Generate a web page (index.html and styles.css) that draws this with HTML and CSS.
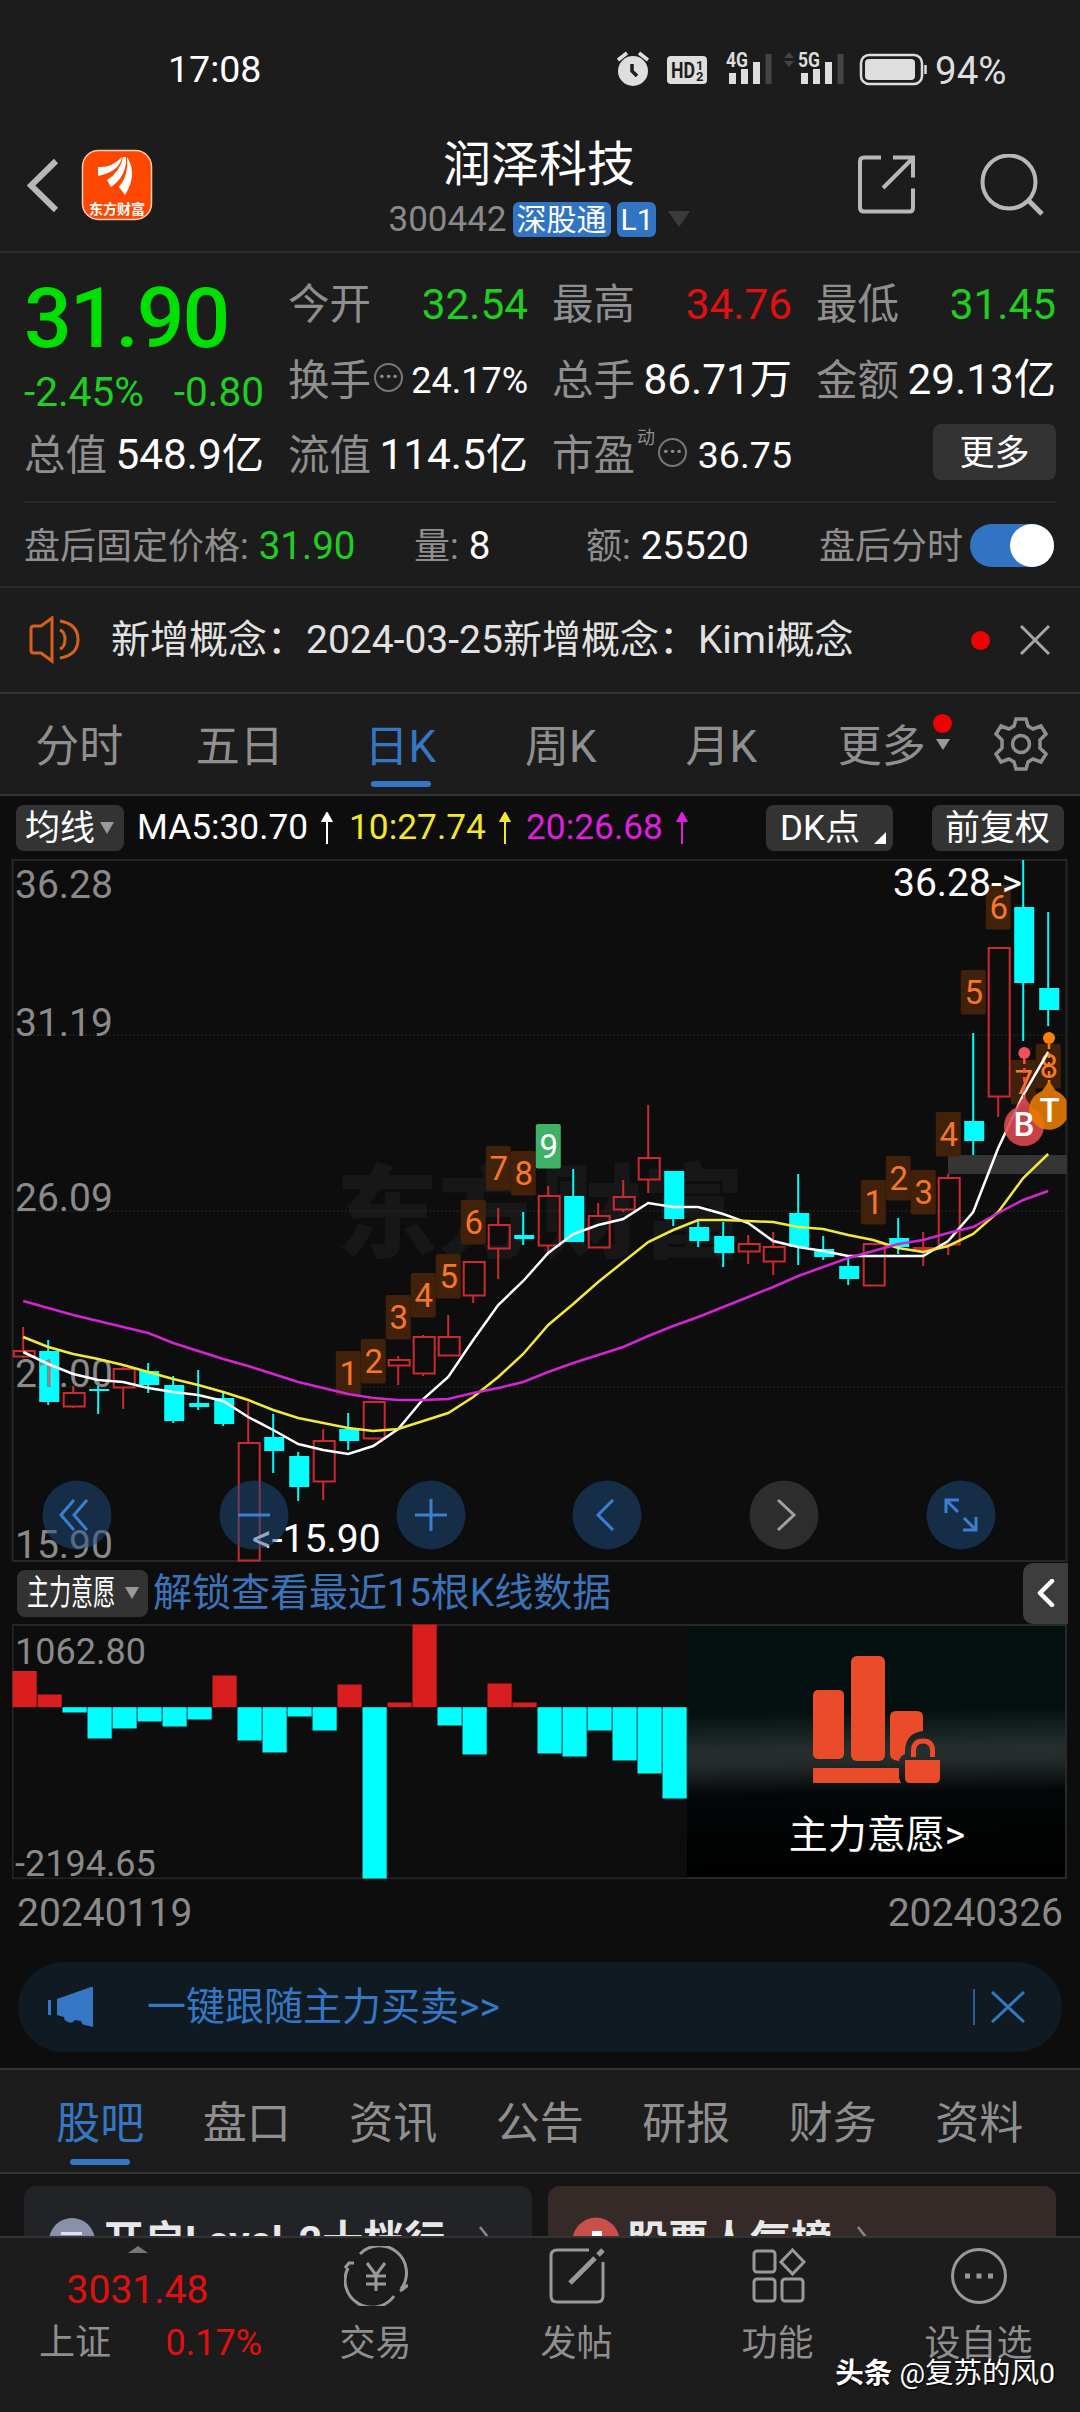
FILE: index.html
```html
<!DOCTYPE html>
<html lang="zh-CN">

<head>
    <meta charset="UTF-8">
    <meta name="viewport" content="width=device-width, initial-scale=1.0">
    <title>润泽科技 300442</title>
    <link rel="stylesheet" href="styles.css">
</head>

<body>
    <div class="status-bar">
        <span class="time">17:08</span>
        <svg class="status-icons" width="312" height="44" viewBox="616 48 312 44">
            <circle cx="633" cy="71" r="15" fill="#dedede" />
            <path d="M618 60l9-7M648 60l-9-7" stroke="#dedede" stroke-width="3.5" />
            <path d="M632 64v7l5 5" stroke="#1c1c1c" stroke-width="3.5" fill="none" />
            <rect x="667" y="56" width="40" height="28" rx="4" fill="#dedede" />
            <text x="671" y="78" class="hd" textLength="24" lengthAdjust="spacingAndGlyphs">HD</text>
            <text x="696" y="70" class="hd-s">1</text>
            <text x="696" y="81" class="hd-s">2</text>
            <text x="726" y="67" class="net" textLength="22" lengthAdjust="spacingAndGlyphs">4G</text>
            <path d="M732.500 73v11M744.500 69v15M756.500 62v22" stroke="#dedede" stroke-width="7" />
            <path d="M768.500 54v30" stroke="#444" stroke-width="6" />
            <path d="M784 58l5-6 5 6zM784 61l5 6 5-6z" fill="#444" />
            <text x="798" y="67" class="net" textLength="22" lengthAdjust="spacingAndGlyphs">5G</text>
            <path d="M804.500 73v11M816.500 69v15M828.500 62v22" stroke="#dedede" stroke-width="7" />
            <path d="M840.500 54v30" stroke="#444" stroke-width="6" />
            <rect x="861" y="55" width="61" height="29" rx="8" fill="none" stroke="#dedede" stroke-width="2.500" />
            <rect x="865" y="59" width="50" height="21" rx="4" fill="#dedede" />
            <path d="M925.500 65v9" stroke="#dedede" stroke-width="2.500" />
        </svg>
        <span class="battery">94%</span>
    </div>

    <header>
        <svg width="128" height="80" viewBox="26 145 128 80">
            <path d="M56 161L31 185.500L56 210" fill="none" stroke="#b8b8b8" stroke-width="6" />
            <rect x="82.500" y="150.500" width="69" height="69" rx="16" fill="#fe4800" stroke="#ffc9b0" stroke-width="1.500" />
            <path d="M98 167Q112 168 122 157Q119 172 98 176ZM123 157L126 157Q127 176 111 187L107 180Q120 172 123 157ZM127 157Q138 174 125 195L119 187Q129 175 127 157Z" fill="#fff" />
            <text x="89" y="214" class="logo-text">东方财富</text>
        </svg>
        <div class="title">
            <h1>润泽科技</h1>
            <div class="code">
                <span>300442</span><b>深股通</b><b class="l1">L1</b>
                <svg width="22" height="16"><path d="M0 0h22l-11 16z" fill="#3b3b3b" /></svg>
            </div>
        </div>
        <svg width="190" height="62" viewBox="856 155 190 62" fill="none" stroke="#b8b8b8" stroke-width="4">
            <path d="M881 158.500h-17q-4 0-4 4v46q0 4 4 4h46q3 0 3-4v-19M893 158.500h20v20M912 160l-29 29" />
            <circle cx="1009" cy="183" r="26.500" />
            <path d="M1028 201l14 14" stroke-width="5" />
        </svg>
    </header>

    <section class="quote">
        <div class="grid">
            <div class="price">31.90</div>
            <div class="cell"><label>今开</label><span class="green big">32.54</span></div>
            <div class="cell"><label>最高</label><span class="red big">34.76</span></div>
            <div class="cell"><label>最低</label><span class="green big">31.45</span></div>
            <div class="cell change green"><span>-2.45%</span><span>-0.80</span></div>
            <div class="cell"><label>换手<i class="dots">···</i></label><span class="mid">24.17%</span></div>
            <div class="cell"><label>总手</label><span>86.71万</span></div>
            <div class="cell"><label>金额</label><span>29.13亿</span></div>
            <div class="cell"><label>总值</label><span>548.9亿</span></div>
            <div class="cell"><label>流值</label><span>114.5亿</span></div>
            <div class="cell"><label>市盈<sup>动</sup><i class="dots">···</i></label><span class="mid pe">36.75</span></div>
            <div class="cell end"><button class="more">更多</button></div>
        </div>
        <div class="after">
            <div class="a1"><label>盘后固定价格:</label><span class="green">31.90</span></div>
            <div class="a2"><label>量:</label><span>8</span></div>
            <div class="a3"><label>额:</label><span>25520</span></div>
            <div class="a4"><label>盘后分时</label><div class="switch"></div></div>
        </div>
    </section>

    <section class="news">
        <svg width="54" height="48" viewBox="28 616 54 48" fill="none" stroke="#d8601c" stroke-width="3">
            <path d="M31 629q0-3 3-3h7l11-8v43l-11-8h-7q-3 0-3-3zM60 630q5 2 5 9.500t-5 9.500M60 621q18 3 18 18.500T60 658" />
        </svg>
        <p>新增概念：2024-03-25新增概念：Kimi概念</p>
        <div class="dot"></div>
        <svg width="30" height="30"><path d="M1 1l28 28M29 1L1 29" stroke="#a5a5a5" stroke-width="3" /></svg>
    </section>

    <nav class="periods">
        <a>分时</a>
        <a>五日</a>
        <a class="active">日K</a>
        <a>周K</a>
        <a>月K</a>
        <a>更多<i class="badge"></i><i class="arrow"></i></a>
        <svg width="58" height="58" viewBox="-29 -29 58 58" fill="none" stroke="#8f8f8f" stroke-width="3.500">
            <path d="M-5-25h10l2 7 5 3 8-3 5 8-6 6v8l6 6-5 8-8-3-5 3-2 7h-10l-2-7-5-3-8 3-5-8 6-6v-8l-6-6 5-8 8 3 5-3z" />
            <circle r="8.500" />
        </svg>
    </nav>

    <main>
        <div class="ma-row">
            <button class="ma-btn">均线<i class="down"></i></button>
            <span class="ma5">MA5:30.70<svg width="12" height="32"><path d="M6 32V6M1.500 9l4.500-8 4.500 8z" /></svg></span>
            <span class="ma10">10:27.74<svg width="12" height="32"><path d="M6 32V6M1.500 9l4.500-8 4.500 8z" /></svg></span>
            <span class="ma20">20:26.68<svg width="12" height="32"><path d="M6 32V6M1.500 9l4.500-8 4.500 8z" /></svg></span>
            <button class="dk">DK点<i class="corner"></i></button>
            <button class="fq">前复权</button>
        </div>

        <div class="kline">
            <svg id="kline" width="1080" height="703" viewBox="0 859 1080 703"></svg>
            <div class="tools">
                <svg viewBox="-35 -35 70 70"><circle r="34.500" /><path d="M-3-15L-16 0L-3 15M10-15L-3 0L10 15" /></svg>
                <svg viewBox="-35 -35 70 70"><circle r="34.500" /><path d="M-16 0h32" /></svg>
                <svg viewBox="-35 -35 70 70"><circle r="34.500" /><path d="M-16 0h32M0-16v32" /></svg>
                <svg viewBox="-35 -35 70 70"><circle r="34.500" /><path d="M6-15L-9 0L6 15" /></svg>
                <svg viewBox="-35 -35 70 70" class="off"><circle r="34.500" /><path d="M-6-15L10 0L-6 15" /></svg>
                <svg viewBox="-35 -35 70 70"><circle r="34.500" /><path d="M-2-15h-13v13M-15-15l12 12M2 15h13v-13M15 15l-12-12" /></svg>
            </div>
        </div>

        <div class="sub-row">
            <button class="zl"><span>主力意愿</span><i class="down"></i></button>
            <a>解锁查看最近15根K线数据</a>
            <div class="fold"><svg width="18" height="28"><path d="M15 2L3 14l12 12" fill="none" stroke="#fff" stroke-width="4.500" stroke-linecap="round" stroke-linejoin="round" /></svg></div>
        </div>

        <div class="volume">
            <svg id="bars" width="675" height="255" viewBox="12 1624.500 675 255"></svg>
            <div class="locked">
                <svg width="130" height="130" viewBox="812 1655 130 130" fill="#ea4c29">
                    <rect x="813" y="1690" width="31" height="69" rx="5" />
                    <rect x="851" y="1656" width="34" height="105" rx="6" />
                    <path d="M896 1711h21q6 0 6 6v14q-17 2-18 19v4q-5 2-6 7q-9-1-9-7v-37q0-6 6-6zM813 1768h86v10l2 5h-88zM905 1760h35v18q0 5-5 5h-25q-5 0-5-5z" />
                    <path d="M913.500 1757v-6q0-10 9.500-10t9.500 10v6" fill="none" stroke="#ea4c29" stroke-width="5" />
                </svg>
                <p>主力意愿&gt;</p>
            </div>
        </div>
        <div class="dates"><span>20240119</span><span>20240326</span></div>

        <div class="promo">
            <svg width="48" height="42" viewBox="46 1986 48 42" fill="#3577c5">
                <path d="M48 2000h3v15h-3zM57 1999l34-12h2v40l-8-2q-3 0-4-4l-6-1q-3 4-7 2q-4-1-4-5l-7-2z" />
            </svg>
            <p>一键跟随主力买卖&gt;&gt;</p>
            <i></i>
            <svg width="34" height="32"><path d="M1 1l32 30M33 1L1 31" stroke="#3577c5" stroke-width="3" /></svg>
        </div>
    </main>

    <nav class="tabs">
        <a class="active">股吧</a>
        <a>盘口</a>
        <a>资讯</a>
        <a>公告</a>
        <a>研报</a>
        <a>财务</a>
        <a>资料</a>
    </nav>

    <div class="cards">
        <div class="card">
            <svg width="48" height="48"><circle cx="24" cy="24" r="23" fill="#8a90a8" /><path d="M13 15h21v3H13zM11 22h25v6H11z" fill="#dfe2ee" /></svg>
            <b>开启Level-2十档行</b>
            <svg class="go" width="14" height="30"><path d="M1 1l11 14L1 29" fill="none" stroke="#888" stroke-width="2.500" /></svg>
        </div>
        <div class="card hot">
            <svg width="48" height="48"><circle cx="24" cy="24" r="23.500" fill="#c9504a" /><path d="M20 14h10v24H20zM10 24h8v14h-8zM32 27h7v11h-7z" fill="#fff" /></svg>
            <b>股票人气榜</b>
            <svg class="go" width="14" height="30"><path d="M1 1l11 14L1 29" fill="none" stroke="#888" stroke-width="2.500" /></svg>
        </div>
    </div>

    <footer>
        <div class="index">
            <i class="up"></i>
            <div class="red point">3031.48</div>
            <div class="rate"><span>上证</span><span class="red">0.17%</span></div>
        </div>
        <div class="item">
            <svg viewBox="-32 -30 64 60"><path d="M-16-22A27 27 0 0 1 25 13M-28-8A27 27 0 0 0 18 20M-31-8l4-5 5 0M24 15l3-2 5-4M-9-13L0-1L9-13M-10 0h20M-10 8h20M0-1v16" /></svg>
            <span>交易</span>
        </div>
        <div class="item">
            <svg viewBox="-32 -30 64 60"><path d="M12-26h-32q-6 0-6 6v40q0 6 6 6h40q6 0 6-6v-34" /><path d="M-7 7L18-18M21-21l5-5" stroke-width="5" /></svg>
            <span>发帖</span>
        </div>
        <div class="item">
            <svg viewBox="-32 -30 64 60"><rect x="-24" y="-25" width="21" height="21" rx="3" /><rect x="-24" y="3" width="21" height="22" rx="3" /><rect x="4" y="3" width="21" height="22" rx="3" /><path d="M14.500-26l11.500 12-11.500 12L3-14z" /></svg>
            <span>功能</span>
        </div>
        <div class="item">
            <svg viewBox="-32 -30 64 60"><circle r="26.500" /><path d="M-14 0h5M-2.500 0h5M9 0h5" stroke-width="5" /></svg>
            <span>设自选</span>
        </div>
        <div class="author"><b>头条</b> @复苏的风0</div>
    </footer>

    <script src="chart.js"></script>
</body>

</html>
```
FILE: styles.css
```css
* {
    box-sizing: border-box;
}

body {
    margin: 0;
    width: 1080px;
    height: 2412px;
    overflow: hidden;
    background: #1c1c1c;
    color: #fff;
    font-family: Roboto, "Noto Sans CJK SC", sans-serif;
    line-height: 1;
}

h1,
p {
    margin: 0;
    font-weight: normal;
}

svg {
    display: block;
    flex: none;
}

i {
    font-style: normal;
}

button {
    display: flex;
    align-items: center;
    border: none;
    border-radius: 8px;
    background: #333;
    color: #fff;
    font-family: inherit;
    font-size: 35px;
    line-height: 1;
    white-space: nowrap;
}

.green {
    color: #1fcf1f;
}

.red {
    color: #e01010;
}

/* 状态栏 */
.status-bar {
    display: flex;
    align-items: center;
    height: 110px;
    padding: 30px 70px 0 168px;
    font-size: 37.5px;
}

.status-icons {
    margin-left: auto;
}

.battery {
    width: 75px;
    margin-left: 7px;
    padding-top: 3px;
    font-size: 38.5px;
    color: #dedede;
}

.hd {
    font-size: 22px;
    font-weight: bold;
    fill: #1c1c1c;
}

.hd-s {
    font-size: 13px;
    font-weight: bold;
    fill: #1c1c1c;
}

.net {
    font-size: 20px;
    font-weight: bold;
    fill: #dedede;
}

/* 标题 */
header {
    display: flex;
    align-items: center;
    justify-content: space-between;
    height: 143px;
    padding: 8px 34px 0 26px;
    border-bottom: 2px solid #2f2f2f;
}

.logo-text {
    font-size: 14px;
    font-weight: bold;
    fill: #fff;
}

.title {
    display: flex;
    flex-direction: column;
    align-items: center;
    gap: 13px;
    margin-left: 68px;
    padding-top: 8px;
}

.title h1 {
    font-size: 48px;
}

.code {
    display: flex;
    align-items: center;
    font-size: 35px;
    color: #8a8a8a;
}

.code b {
    height: 35px;
    margin-left: 6px;
    padding: 3px 4px;
    border-radius: 6px;
    background: #3174c4;
    color: #fff;
    font-size: 30px;
    font-weight: normal;
}

.code .l1 {
    width: 39px;
    text-align: center;
}

.code svg {
    margin-left: 12px;
}

/* 行情 */
.quote {
    height: 335px;
    padding: 12px 24px 0;
    border-bottom: 2px solid #2a2a2a;
}

.grid {
    display: grid;
    grid-template-columns: repeat(4, 240px);
    grid-template-rows: 76px 75px 75px;
    column-gap: 24px;
    height: 238px;
    padding-top: 2px;
    border-bottom: 2px solid #282828;
}

.price {
    align-self: start;
    padding-top: 10px;
    font-size: 84px;
    font-weight: 500;
    letter-spacing: -2px;
    color: #00e000;
}

.cell {
    display: flex;
    align-items: center;
    justify-content: space-between;
    font-size: 42.3px;
    white-space: nowrap;
}

.cell label {
    display: flex;
    align-items: center;
    color: #8f8f8f;
    font-size: 41.5px;
}

.cell .big {
    font-size: 42.3px;
}

.cell .mid {
    font-size: 36px;
}

.cell .pe {
    font-size: 37.5px;
}

.cell.change {
    padding-top: 24px;
    font-size: 40.5px;
}

.dots {
    width: 29px;
    height: 29px;
    margin: -6px 0 0 3px;
    border: 2px solid #777;
    border-radius: 50%;
    font-size: 22px;
    font-weight: bold;
    line-height: 24px;
    text-align: center;
}

sup {
    margin: -36px 0 0 2px;
    font-size: 18px;
    line-height: 1;
}

.cell sup+.dots {
    margin-left: 3px;
}

.end {
    justify-content: flex-end;
}

.more {
    justify-content: center;
    width: 123px;
    height: 56px;
    margin-top: -7px;
    padding-top: 3px;
}

.after {
    display: flex;
    align-items: center;
    height: 85px;
    font-size: 38.5px;
}

.after>div {
    display: flex;
    align-items: center;
}

.after label,
.after span {
    padding-top: 2px;
}

.after label {
    margin-right: 10px;
    color: #8f8f8f;
    font-size: 36px;
}

.a1 {
    width: 390px;
}

.a2 {
    width: 172px;
}

.a3 {
    width: 233px;
}

.a4 label {
    margin-right: 7px;
}

.switch {
    width: 84px;
    height: 43px;
    border-radius: 22px;
    background: #3174c4;
    display: flex;
    justify-content: flex-end;
}

.switch::after {
    content: "";
    width: 44px;
    height: 43px;
    border-radius: 50%;
    background: #fff;
}

/* 公告 */
.news {
    display: flex;
    align-items: center;
    height: 106px;
    padding: 0 30px 0 28px;
    border-bottom: 2px solid #333;
    font-size: 39px;
    color: #e2e2e2;
}

.news p {
    margin-left: 29px;
}

.dot {
    width: 19px;
    height: 19px;
    margin: 0 30px 0 auto;
    border-radius: 50%;
    background: #f00000;
}

/* 周期 */
.periods {
    display: flex;
    align-items: center;
    height: 102px;
    border-bottom: 2px solid #333;
    font-size: 44px;
    color: #8f8f8f;
}

.periods a,
.tabs a {
    position: relative;
    display: flex;
    align-items: center;
    justify-content: center;
    width: 160.5px;
    height: 100%;
    padding-top: 5px;
}

.periods a {
    padding-right: 2px;
}

.periods svg {
    margin-left: 29px;
}

.active {
    color: #3577c5;
}

.active::after {
    content: "";
    position: absolute;
    left: calc(50% - 30px);
    bottom: 7px;
    width: 60px;
    height: 6px;
    border-radius: 3px;
    background: #3577c5;
}

.badge {
    position: absolute;
    right: 11px;
    top: 20px;
    width: 19px;
    height: 19px;
    border-radius: 50%;
    background: #f00000;
}

.arrow {
    position: absolute;
    right: 13px;
    top: 45px;
    border: 7px solid transparent;
    border-top: 11px solid #999;
    border-bottom: 0;
}

/* 图表 */
main {
    height: 1272px;
    background: #0d0d0d;
}

.ma-row {
    display: flex;
    align-items: center;
    height: 63px;
    padding: 1px 16px 0;
    font-size: 35px;
    white-space: nowrap;
}

.ma-row button {
    height: 46px;
}

.ma-row span {
    display: flex;
    align-items: center;
}

.ma-row span svg {
    margin-left: 13px;
    fill: currentColor;
    stroke: currentColor;
    stroke-width: 2;
}

.down {
    border: 7px solid transparent;
    border-top: 12px solid #999;
    border-bottom: 0;
}

.ma-btn {
    width: 108px;
    padding: 0 0 0 9px;
}

.ma-btn .down {
    margin-left: 5px;
}

.ma5 {
    width: 212px;
    margin-left: 13px;
    font-size: 35.3px;
}

.ma10 {
    width: 177px;
    color: #f5e829;
    font-size: 35.3px;
}

.ma20 {
    color: #e01ee0;
    font-size: 35.3px;
}

.ma-row .dk {
    position: relative;
    width: 127px;
    margin-left: auto;
    padding: 0 0 0 14px;
}

.corner {
    position: absolute;
    right: 7px;
    bottom: 7px;
    border: 6px solid #fff;
    border-top-color: transparent;
    border-left-color: transparent;
}

.fq {
    width: 132px;
    margin-left: 39px;
    padding: 0 13px;
}

.kline {
    position: relative;
    height: 703px;
}

.kline text,
.volume text {
    font-size: 39px;
    fill: #8a8a8a;
}

.kline text.white {
    fill: #fff;
}

.kline text.seq {
    font-size: 33px;
    fill: #f5782a;
    text-anchor: middle;
}

.kline text.wm {
    font-size: 102px;
    font-weight: 900;
    fill: #171717;
}

.kline text.mark {
    font-size: 33px;
    font-weight: 500;
    fill: #fff;
    text-anchor: middle;
}

.volume text {
    font-size: 36px;
}

/* 图表上的悬浮按钮 */
.tools {
    position: absolute;
    left: 42px;
    right: 84px;
    bottom: 12px;
    display: flex;
    justify-content: space-between;
}

.tools svg {
    width: 70px;
    height: 70px;
    fill: none;
    stroke: #3a7fd2;
    stroke-width: 3;
}

.tools circle {
    fill: rgba(30, 77, 130, .5);
    stroke: none;
}

.tools .off {
    stroke: #a0a0a0;
}

.tools .off circle {
    fill: #2d2d2d;
}

.sub-row {
    display: flex;
    align-items: center;
    height: 62px;
    padding: 0 12px 0 17px;
    font-size: 39px;
    color: #3b73b8;
    white-space: nowrap;
}

.zl {
    width: 131px;
    height: 47px;
    padding: 0 0 0 10px;
}

.zl span {
    width: 98px;
    font-size: 35px;
    transform: scaleX(.63);
    transform-origin: left;
}

.sub-row a {
    margin-left: 5px;
}

.fold {
    display: flex;
    align-items: center;
    justify-content: center;
    width: 45px;
    height: 61px;
    margin-left: auto;
    border-radius: 10px 0 0 10px;
    background: #3d3d3d;
}

.volume {
    display: flex;
    height: 255px;
    margin: 0 13px 0 12px;
}

.locked {
    display: flex;
    flex-direction: column;
    align-items: center;
    width: 381px;
    padding: 29px 0 0 2px;
    border: 2px solid #262a2a;
    border-left: 0;
    background: linear-gradient(179deg, #04100f 0%, #04100f 34%, #262e2e 49%, #252b2b 54%, #030707 66%, #000 100%);
    font-size: 39px;
}

.locked p {
    margin-top: 31px;
}

.dates {
    display: flex;
    justify-content: space-between;
    height: 83px;
    padding: 15px 17px 0;
    font-size: 39px;
    color: #8a8a8a;
}

.promo {
    display: flex;
    align-items: center;
    height: 90px;
    margin: 0 18px;
    padding: 0 37px 0 28px;
    border-radius: 45px;
    background: #0f1a22;
    color: #3577c5;
    font-size: 39px;
}

.promo p {
    margin-left: 53px;
}

.promo i {
    width: 2px;
    height: 36px;
    margin: 0 16px 0 auto;
    background: #2a5c97;
}

/* 底部标签 */
.tabs {
    display: flex;
    height: 106px;
    padding: 0 27px;
    border-top: 2px solid #333;
    border-bottom: 2px solid #333;
    font-size: 44px;
    color: #8f8f8f;
}

.tabs a {
    width: 146.5px;
}

.cards {
    display: flex;
    gap: 16px;
    height: 62px;
    padding: 12px 24px 0;
    background: #151515;
    overflow: hidden;
}

.card {
    display: flex;
    align-items: center;
    width: 508px;
    height: 110px;
    padding: 0 24px;
    border-radius: 12px 12px 0 0;
    background: #222327;
    color: #e8e8e8;
    font-size: 41px;
}

.card b {
    margin-left: 7px;
    white-space: nowrap;
}

.card .go {
    margin: 0 15px 0 auto;
}

.hot {
    background: #352a28;
}

.card.hot .go {
    margin-left: 25px;
}

footer {
    position: relative;
    display: flex;
    height: 178px;
    border-top: 2px solid #333;
    background: #1c1c1c;
    color: #8f8f8f;
}

.index {
    display: flex;
    flex-direction: column;
    align-items: center;
    width: 275px;
}

.up {
    margin-top: 8px;
    border: 10px solid transparent;
    border-bottom: 7px solid #777;
    border-top: 0;
}

.point {
    margin-top: 18px;
    font-size: 39px;
}

.rate {
    display: flex;
    justify-content: space-between;
    width: 223px;
    margin: 15px 0 0 26px;
    font-size: 36px;
}

.item {
    display: flex;
    flex-direction: column;
    align-items: center;
    width: 201px;
    padding-top: 8px;
    font-size: 36px;
}

.item svg {
    width: 64px;
    height: 60px;
    margin-bottom: 20px;
    fill: none;
    stroke: #999;
    stroke-width: 3;
}

.author {
    position: absolute;
    right: 25px;
    bottom: 26px;
    font-size: 28.500px;
    color: #fff;
    text-shadow: 1px 1px 2px #000;
}
```
FILE: chart.js
```js
// [涨跌, 最高, 实体上, 实体下, 最低] 均为画布 y 坐标
var candles = [
    ['r', 1327, 1350, 1357, 1358], ['c', 1340, 1351, 1402, 1405], ['r', 1386, 1392, 1407, 1408],
    ['c', 1382, 1389, 1391, 1414], ['r', 1367, 1368, 1388, 1409], ['c', 1363, 1371, 1385, 1393],
    ['c', 1376, 1385, 1421, 1423], ['c', 1370, 1403, 1407, 1410], ['c', 1392, 1398, 1424, 1426],
    ['r', 1402, 1442, 1561, 1561], ['c', 1414, 1437, 1451, 1473], ['c', 1452, 1456, 1487, 1501],
    ['r', 1429, 1440, 1482, 1500], ['c', 1413, 1429, 1441, 1450], ['r', 1401, 1401, 1439, 1439],
    ['r', 1356, 1359, 1366, 1385], ['r', 1335, 1336, 1374, 1376], ['r', 1315, 1336, 1356, 1356],
    ['r', 1261, 1261, 1296, 1303], ['r', 1208, 1224, 1249, 1279], ['c', 1212, 1235, 1239, 1245],
    ['r', 1186, 1195, 1246, 1253], ['c', 1169, 1196, 1242, 1242], ['r', 1203, 1215, 1248, 1248],
    ['r', 1180, 1196, 1210, 1212], ['r', 1105, 1157, 1180, 1193], ['c', 1171, 1171, 1219, 1226],
    ['c', 1220, 1227, 1241, 1247], ['c', 1222, 1236, 1253, 1267], ['r', 1235, 1243, 1252, 1264],
    ['r', 1232, 1246, 1262, 1275], ['c', 1174, 1213, 1247, 1265], ['c', 1236, 1249, 1257, 1260],
    ['c', 1258, 1266, 1279, 1285], ['r', 1243, 1243, 1286, 1286], ['c', 1218, 1238, 1247, 1254],
    ['r', 1232, 1247, 1250, 1266], ['r', 1174, 1177, 1245, 1255], ['c', 1033, 1121, 1141, 1155],
    ['r', 947, 947, 1097, 1117], ['c', 860, 907, 983, 1041], ['c', 912, 988, 1010, 1026]
];
var ma5 = [1352, 1364, 1374, 1380, 1382, 1388, 1392, 1395, 1401, 1417, 1430, 1444, 1450, 1454, 1446, 1429, 1399, 1377, 1340, 1305, 1281,
    1253, 1234, 1225, 1219, 1203, 1207, 1207, 1214, 1223, 1241, 1247, 1251, 1256, 1256, 1256, 1256, 1241, 1212, 1148, 1095, 1052];
var ma10 = [1337, 1347, 1354, 1359, 1365, 1372, 1379, 1385, 1392, 1400, 1410, 1418, 1423, 1428, 1431, 1429, 1421, 1413, 1397, 1377, 1354,
    1325, 1304, 1282, 1262, 1242, 1230, 1220, 1220, 1221, 1222, 1227, 1229, 1235, 1240, 1248, 1252, 1246, 1234, 1212, 1178, 1154];
var ma20 = [1301, 1308, 1315, 1321, 1327, 1333, 1343, 1351, 1359, 1366, 1374, 1382, 1388, 1394, 1398, 1400, 1400, 1399, 1393, 1388, 1382,
    1372, 1363, 1355, 1347, 1336, 1326, 1317, 1307, 1297, 1287, 1276, 1267, 1258, 1251, 1244, 1240, 1233, 1227, 1213, 1200, 1191];
// [K线序号, 顶部, 数字]
var seq = [[13, 1351, 1], [14, 1339, 2], [15, 1295, 3], [16, 1273, 4], [17, 1254, 5], [18, 1200, 6], [19, 1146, 7], [20, 1151, 8], [21, 1124, 9],
    [34, 1180, 1], [35, 1156, 2], [36, 1170, 3], [37, 1112, 4], [38, 970, 5], [39, 885, 6], [40, 1060, 7], [41, 1044, 8]];
var bars = [1671.5, 1695, 1713, 1739, 1729, 1722, 1727, 1720, 1676, 1741, 1753, 1717, 1731, 1685, 1879, 1703, 1625, 1726, 1755, 1684, 1703,
    1754, 1757, 1731, 1761, 1774, 1799];

function cx(i) {
    return 23.2 + 25 * i;
}

function line(x1, y1, x2, y2, color, w, extra) {
    return '<path d="M' + x1 + ' ' + y1 + 'L' + x2 + ' ' + y2 + '" stroke="' + color + '" stroke-width="' + w + '" ' + (extra || '') + '/>';
}

function text(x, y, s, cls) {
    return '<text x="' + x + '" y="' + y + '" class="' + (cls || '') + '">' + s + '</text>';
}

function ma(data, color) {
    var pts = data.map(function (y, i) { return cx(i) + ',' + y; });
    return '<polyline points="' + pts.join(' ') + '" fill="none" stroke="' + color + '" stroke-width="2.5"/>';
}

function drawKline() {
    var s = text(336, 1250, '东方财富', 'wm');
    s += '<rect x="12.500" y="860" width="1054" height="701" fill="none" stroke="#262626" stroke-width="2"/>';
    [1035, 1211, 1387].forEach(function (y) {
        s += line(13, y, 1066, y, '#2c2c2c', 1, 'stroke-dasharray="2 2"');
    });
    s += '<rect x="948" y="1155" width="119" height="19" fill="#353535"/>';

    seq.forEach(function (d) {
        s += '<rect x="' + (cx(d[0]) - 12.4) + '" y="' + d[1] + '" width="25" height="44.500" rx="2" fill="' + (d[2] == 9 ? '#3fb268' : '#42210a') + '"/>';
    });
    candles.forEach(function (d, i) {
        var x = cx(i), c = d[0] == 'r' ? '#cc2a30' : '#00ffff';
        s += line(x, d[1], x, d[2], c, 2);
        s += line(x, d[3], x, d[4], c, 2);
        if (d[0] == 'r') {
            s += '<rect x="' + (x - 9.5) + '" y="' + (d[2] + 1) + '" width="21" height="' + (d[3] - d[2] - 1.5) + '" fill="none" stroke="' + c + '" stroke-width="2"/>';
        } else {
            s += '<rect x="' + (x - 9) + '" y="' + d[2] + '" width="20" height="' + (d[3] - d[2]) + '" fill="' + c + '"/>';
        }
    });
    seq.forEach(function (d) {
        s += '<text x="' + (cx(d[0]) + .5) + '" y="' + (d[1] + 34) + '" class="seq"' + (d[2] == 9 ? ' style="fill:#fff"' : '') + '>' + d[2] + '</text>';
    });

    s += text(15, 898, '36.28') + text(15, 1036, '31.19') + text(15, 1211, '26.09') + text(15, 1387, '21.00') + text(15, 1558, '15.90');
    s += ma(ma5, '#fff') + ma(ma10, '#f0ea3c') + ma(ma20, '#d325d3');

    // 买卖点
    s += '<circle cx="1024.300" cy="1053" r="6" fill="#f05058"/>' + line(1024.300, 1059, 1024.300, 1100, '#f05058', 2.500, 'stroke-dasharray="5 4"');
    s += '<g fill="#e04a52" opacity=".88"><circle cx="1024" cy="1126" r="20"/><path d="M1015 1109l9-13 9 13z"/></g>';
    s += '<circle cx="1049" cy="1038" r="6" fill="#ff8000"/>' + line(1049, 1044, 1049, 1084, '#ff8000', 2.500, 'stroke-dasharray="5 4"');
    s += '<g fill="#e87a04" opacity=".9"><path d="M1066.500 1100a20 20 0 1 0 0 19.500z"/><path d="M1040 1094l9-13 9 13z"/></g>';
    s += text(1024, 1136, 'B', 'mark') + text(1049.500, 1122, 'T', 'mark');
    s += text(893, 896, '36.28-&gt;', 'white') + text(252, 1552, '&lt;-15.90', 'white');
    document.getElementById('kline').innerHTML = s;
}

function drawBars() {
    var zero = 1707.7, s = '';
    s += '<path d="M687 1625.500H12.500V1879H687" fill="none" stroke="#262626" stroke-width="2"/>';
    bars.forEach(function (y, i) {
        s += '<rect x="' + (12.5 + 25 * i) + '" y="' + Math.min(y, zero) + '" width="24.200" height="' + Math.abs(y - zero) + '" fill="' + (y < zero ? '#d81e1e' : '#00ffff') + '"/>';
    });
    s += text(15, 1664, '1062.80') + text(15, 1876, '-2194.65');
    document.getElementById('bars').innerHTML = s;
}

drawKline();
drawBars();
```
